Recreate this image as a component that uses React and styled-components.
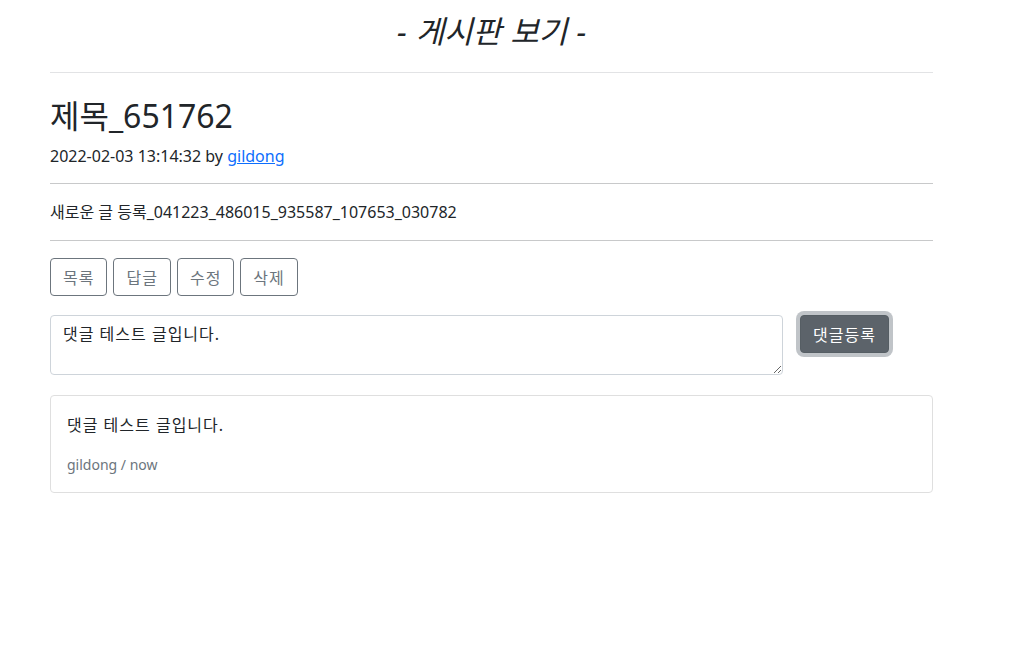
import React, { useState } from 'react'
import styled, { createGlobalStyle } from 'styled-components'

const GlobalStyle = createGlobalStyle`
   * {
      box-sizing: border-box;
   }
   body {
      margin: 0;
      background: #fff;
      color: #212529;
      font-family: 'Noto Sans', 'Noto Sans CJK KR', sans-serif;
      font-size: 16px;
      line-height: 1.5;
   }
`

const post = {
   title: '제목_651762',
   date: '2022-02-03 13:14:32',
   author: 'gildong',
   content: '새로운 글 등록_041223_486015_935587_107653_030782',
}

const comments = [{ id: 1, text: '댓글 테스트 글입니다.', author: 'gildong', time: 'now' }]

const App = () => {
   const [comment, setComment] = useState('댓글 테스트 글입니다.')

   return (
      <>
         <GlobalStyle />
         <Container>
            <PageTitle>- 게시판 보기 -</PageTitle>
            <Rule $light />
            <PostTitle>{post.title}</PostTitle>
            <Meta>
               {post.date} by <AuthorLink href="#">{post.author}</AuthorLink>
            </Meta>
            <Rule />
            <Content>{post.content}</Content>
            <Rule />
            <ButtonRow>
               <OutlineButton>목록</OutlineButton>
               <OutlineButton>답글</OutlineButton>
               <OutlineButton>수정</OutlineButton>
               <OutlineButton>삭제</OutlineButton>
            </ButtonRow>
            <CommentForm onSubmit={(e) => e.preventDefault()}>
               <CommentInput value={comment} onChange={(e) => setComment(e.target.value)} />
               <SubmitButton type="submit">댓글등록</SubmitButton>
            </CommentForm>
            {comments.map((c) => (
               <CommentCard key={c.id}>
                  <CommentText>{c.text}</CommentText>
                  <CommentMeta>
                     {c.author} / {c.time}
                  </CommentMeta>
               </CommentCard>
            ))}
         </Container>
      </>
   )
}

const Container = styled.div`
   width: 883px;
   margin-left: 50px;
   display: flex;
   flex-direction: column;
`

const PageTitle = styled.h2`
   margin: 12px 0 0;
   height: 38px;
   text-align: center;
   font-size: 31px;
   font-weight: 400;
   font-style: italic;
   line-height: 38px;
   word-spacing: 1px;
`

const Rule = styled.hr`
   width: 100%;
   margin: ${({ $light }) => ($light ? '22px 0 0' : '0')};
   border: 0;
   border-top: 1px solid ${({ $light }) => ($light ? '#e2e3e5' : '#c8c9ca')};
`

const PostTitle = styled.h2`
   margin: 23px 0 8px;
   font-size: 32px;
   font-weight: 400;
   line-height: 40px;
`

const Meta = styled.div`
   margin: 0 0 15px;
   font-size: 16px;
   line-height: 24px;
   height: 24px;
`

const AuthorLink = styled.a`
   color: #0d6efd;
   text-decoration: underline;
`

const Content = styled.p`
   margin: 16px 0 16px;
   line-height: 24px;
`

const ButtonRow = styled.div`
   display: flex;
   gap: 6px;
   margin-top: 17px;
`

const OutlineButton = styled.button`
   height: 38px;
   padding: 0 12px;
   border: 1px solid #6c757d;
   border-radius: 4px;
   background: #fff;
   color: #6c757d;
   font-family: inherit;
   font-size: 16px;
   letter-spacing: 1px;
   cursor: pointer;
`

const CommentForm = styled.form`
   display: flex;
   align-items: flex-start;
   gap: 17px;
   margin-top: 19px;
`

const CommentInput = styled.textarea`
   width: 733px;
   height: 60px;
   padding: 6px 12px;
   border: 1px solid #ced4da;
   border-radius: 4px;
   color: #212529;
   font-family: inherit;
   font-size: 16px;
   line-height: 24px;
   letter-spacing: 1px;
   resize: vertical;
`

const SubmitButton = styled.button`
   height: 38px;
   padding: 0 12px;
   border: 1px solid #565e64;
   border-radius: 4px;
   background: #5c636a;
   color: #fff;
   font-family: inherit;
   font-size: 16px;
   letter-spacing: 1px;
   box-shadow: 0 0 0 4px rgba(130, 138, 145, 0.5);
   cursor: pointer;
`

const CommentCard = styled.div`
   margin-top: 20px;
   padding: 17px 16px 15px;
   border: 1px solid #dfdfdf;
   border-radius: 4px;
`

const CommentText = styled.p`
   margin: 0 0 16px;
   line-height: 24px;
   letter-spacing: 1px;
`

const CommentMeta = styled.div`
   font-size: 14px;
   line-height: 24px;
   color: #6c757d;
`

export default App
